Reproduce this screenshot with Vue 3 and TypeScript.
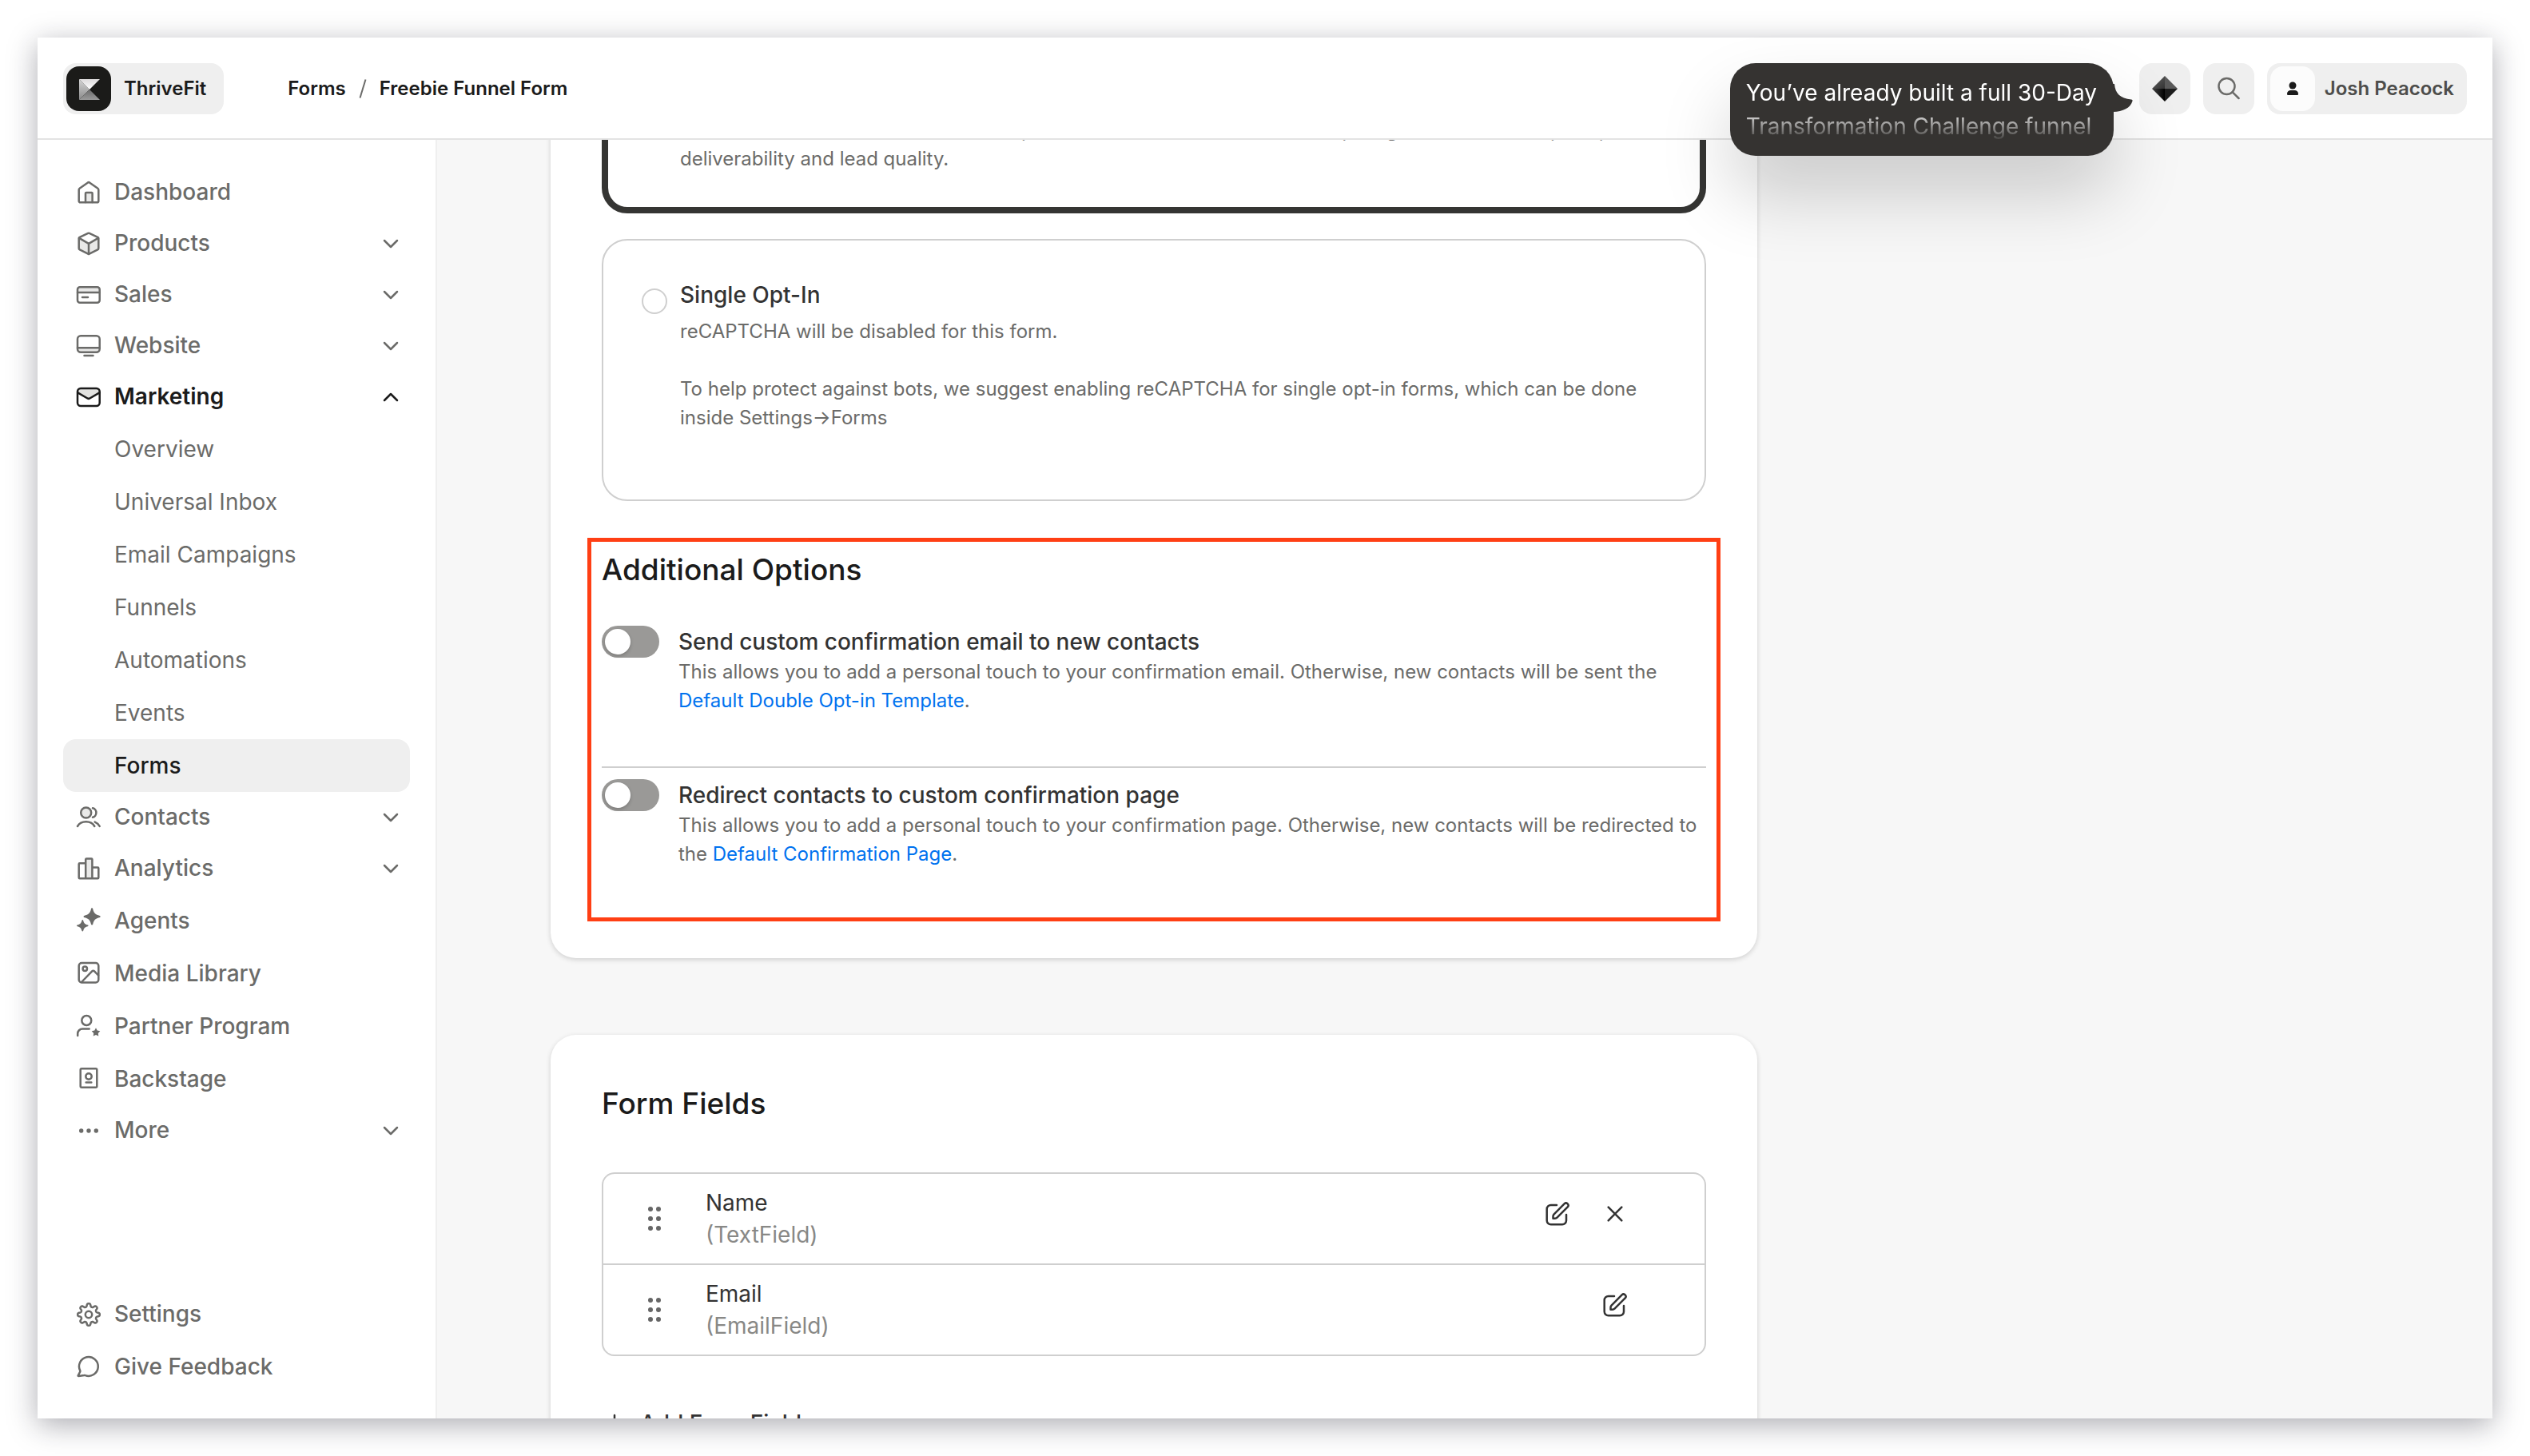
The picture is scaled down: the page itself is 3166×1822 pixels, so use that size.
<script setup lang="ts">
import { ref } from 'vue'

type IconName =
  | 'home' | 'box' | 'card' | 'monitor' | 'mail' | 'people' | 'bars'
  | 'sparkles' | 'image' | 'partner' | 'badge' | 'dots' | 'gear' | 'chat'

interface NavItem {
  label: string
  icon: IconName
  group?: boolean
  children?: string[]
}

const navItems: NavItem[] = [
  { label: 'Dashboard', icon: 'home' },
  { label: 'Products', icon: 'box', group: true },
  { label: 'Sales', icon: 'card', group: true },
  { label: 'Website', icon: 'monitor', group: true },
  {
    label: 'Marketing',
    icon: 'mail',
    group: true,
    children: ['Overview', 'Universal Inbox', 'Email Campaigns', 'Funnels', 'Automations', 'Events', 'Forms'],
  },
  { label: 'Contacts', icon: 'people', group: true },
  { label: 'Analytics', icon: 'bars', group: true },
  { label: 'Agents', icon: 'sparkles' },
  { label: 'Media Library', icon: 'image' },
  { label: 'Partner Program', icon: 'partner' },
  { label: 'Backstage', icon: 'badge' },
  { label: 'More', icon: 'dots', group: true },
]

const footerItems: NavItem[] = [
  { label: 'Settings', icon: 'gear' },
  { label: 'Give Feedback', icon: 'chat' },
]

const activeGroup = 'Marketing'
const activePage = 'Forms'

// Outline of an eight-toothed gear with rounded teeth.
function gearPath(cx: number, cy: number, radius: number, depth: number): string {
  const points: string[] = []
  for (let i = 0; i < 160; i++) {
    const angle = (i / 160) * Math.PI * 2
    const r = radius + depth * Math.tanh(1.8 * Math.cos(8 * angle))
    points.push(`${(cx + r * Math.sin(angle)).toFixed(2)} ${(cy - r * Math.cos(angle)).toFixed(2)}`)
  }
  return `M${points.join('L')}Z`
}

const icons: Record<IconName, string> = {
  home: '<path class="tint" d="M12 29V17.5h8.6V29z"/><path d="M3.7 13.4c0-.7.3-1.3.9-1.7L15 4.4c.6-.4 1.4-.4 2 0l10.4 7.3c.6.4.9 1 .9 1.700v14a1.900 1.900 0 0 1-1.900 1.900H5.600a1.900 1.900 0 0 1-1.900-1.900z"/><path d="M12 29V18a1 1 0 0 1 1-1h6.600a1 1 0 0 1 1 1v11"/>',
  box: '<path class="tint" d="M3.7 10.5 16 17l12.3-6.5v13.2L16 30 3.7 23.7z"/><path d="M15.2 3.9a2 2 0 0 1 1.6 0l10.5 5c.6.3 1 .9 1 1.6v12.2c0 .7-.4 1.4-1 1.7l-10.5 5.3a2 2 0 0 1-1.6 0L4.700 24.400c-.6-.3-1-1-1-1.700V10.500c0-.7.4-1.300 1-1.600z"/><path d="m4 9.900 12 6.900 12-6.900M16 17v13"/>',
  card: '<path class="tint" d="M2.300 8h27.400v6H2.300z"/><rect x="2" y="7.300" width="27.700" height="19.400" rx="3"/><path d="M2 14h27.700M8 20h7"/>',
  monitor: '<path class="tint" d="M2.300 19.300h27.400v5H2.300z"/><rect x="2" y="4.300" width="27.700" height="20.400" rx="4"/><path d="M2 19.300h27.700M10.500 29h11"/>',
  mail: '<path class="tint strong" d="M2.500 7h27v4.500L16 19 2.500 11.500z"/><rect x="2" y="6" width="27.700" height="22" rx="4"/><path d="m2.300 11.300 12.200 7.200a3 3 0 0 0 2.800 0l12.200-7.200"/>',
  people: '<circle class="tint outlined" cx="12.700" cy="11" r="6.500"/><path d="M21 5.300c2.600.5 4.400 3 4.400 5.700s-1.800 5.200-4.400 5.700M2 28c2-3.400 6-5.700 10.700-5.700S21.300 24.600 23.300 28M23.700 22.600c2.500 1 4.700 2.900 6 5.400"/>',
  bars: '<path class="tint" d="M12.200 5h8.200v24h-8.200z"/><path d="M12.200 29.300V5.600a1 1 0 0 1 1-1h6.200a1 1 0 0 1 1 1v23.700M12.200 10.300H4.700a1 1 0 0 0-1 1v17a1 1 0 0 0 1 1h22.600a1 1 0 0 0 1-1V16.600a1 1 0 0 0-1-1h-6.900"/>',
  sparkles: '<path class="solid" d="M20 .5c.5-.5 1 0 1.200.8 1.300 5.500 3 7.200 8.800 8.700.9.300.9 1.700 0 2-5.800 1.500-7.500 3.200-8.800 8.700-.2.900-1.900.9-2.200 0-1.300-5.500-3-7.200-8.800-8.700-.9-.3-.9-1.700 0-2 5.800-1.500 7.500-3.200 8.800-8.700.2-.8.500-1.300 1-.8z"/><path class="solid" d="M8.300 15c.4 0 .7.300.9.900.9 3.500 2.100 4.700 5.700 5.600.9.300.9 1.400 0 1.700-3.600.9-4.800 2.100-5.700 5.600-.3.900-1.500.9-1.800 0-.9-3.500-2.100-4.700-5.700-5.600-.9-.3-.9-1.400 0-1.700 3.600-.9 4.800-2.100 5.700-5.600.2-.6.500-.9.900-.9z"/>',
  image: '<rect x="3.700" y="3" width="24.600" height="24.500" rx="3.500"/><circle cx="11.300" cy="10.300" r="2.700"/><path d="m7 27 13.200-13.600a2 2 0 0 1 2.900 0L28 18.500"/>',
  partner: '<circle cx="13.300" cy="9" r="6"/><path d="M2.200 28v-2.500a6 6 0 0 1 6-6h8.500"/><path class="solid" d="m25 18.300 1.700 3.300 3.600.6-2.500 2.700.5 3.700-3.300-1.600-3.300 1.600.5-3.700-2.500-2.700 3.600-.6z"/>',
  badge: '<rect x="5.700" y="3.300" width="20.600" height="23.400" rx="1.500"/><circle cx="16" cy="13" r="3.700"/><path d="M12.700 20.400h6.600"/>',
  dots: '<circle class="solid" cx="6.700" cy="17" r="2.700"/><circle class="solid" cx="16" cy="17" r="2.700"/><circle class="solid" cx="25.300" cy="17" r="2.700"/>',
  gear: `<path d="${gearPath(16, 17, 11.9, 2)}"/><circle cx="16" cy="17" r="4.200"/>`,
  chat: '<path d="M3.300 28.100c-.5 0-.8-.4-.6-.8l2.500-4.600c.2-.4.200-.9.100-1.300a11.900 11.900 0 1 1 6.400 5.700c-.4-.2-.8-.2-1.200-.1z"/>',
}

const sendCustomEmail = ref(false)
const redirectContacts = ref(false)
const optIn = ref('double')

const fields = [
  { name: 'Name', type: '(TextField)', removable: true },
  { name: 'Email', type: '(EmailField)', removable: false },
]
</script>

<template>
  <div class="window">
    <header class="topbar">
      <button class="brand" type="button">
        <svg class="logo" viewBox="0 0 56 56" aria-hidden="true">
          <defs>
            <linearGradient id="logo-left" x1="0" y1="0" x2="0" y2="1">
              <stop offset="0" stop-color="#d5d5d5" />
              <stop offset="1" stop-color="#8a8a8a" />
            </linearGradient>
            <linearGradient id="logo-top" x1="0" y1="0" x2="0" y2="1">
              <stop offset="0" stop-color="#dcdadb" />
              <stop offset="1" stop-color="#ffffff" />
            </linearGradient>
            <linearGradient id="logo-bottom" x1="0" y1="0" x2="0" y2="1">
              <stop offset="0" stop-color="#6a6a6a" />
              <stop offset="1" stop-color="#9a9a9a" />
            </linearGradient>
          </defs>
          <rect width="56" height="56" rx="16" fill="#1b1b19" />
          <path d="M16 16v26l13-13z" fill="url(#logo-left)" />
          <path d="M16 16h26L29 29z" fill="url(#logo-top)" />
          <path d="M16 42h26L29 29z" fill="url(#logo-bottom)" />
        </svg>
        <span>ThriveFit</span>
      </button>

      <nav class="crumbs" aria-label="Breadcrumb">
        <a href="#forms">Forms</a>
        <svg class="slash" viewBox="0 0 10 26" aria-hidden="true"><path d="M8.500 1.500 1.500 24.500" /></svg>
        <a href="#form" aria-current="page">Freebie Funnel Form</a>
      </nav>

      <div class="tools">
        <div class="assistant">
          <button class="tool" type="button" aria-label="Assistant">
            <svg viewBox="0 0 32 32" width="32" height="32" aria-hidden="true">
              <defs>
                <linearGradient id="gem-left" x1="0" y1="0" x2="1" y2="1">
                  <stop offset="0" stop-color="#666" />
                  <stop offset="1" stop-color="#333" />
                </linearGradient>
                <linearGradient id="gem-low" x1="0" y1="0" x2="1" y2="0">
                  <stop offset="0" stop-color="#444" />
                  <stop offset="1" stop-color="#000" />
                </linearGradient>
              </defs>
              <path d="M16 0v16H0z" fill="url(#gem-left)" />
              <path d="M16 0v16h16z" fill="#5a5a5a" />
              <path d="M0 16h16v16z" fill="url(#gem-low)" />
              <path d="M32 16H16v16z" fill="#1d1d1d" />
            </svg>
          </button>
          <div class="bubble" role="status">
            <p>You’ve already built a full 30-Day Transformation Challenge funnel</p>
            <svg class="tail" viewBox="0 0 26 36" aria-hidden="true">
              <path d="M0 0h2c1 12 7 18 21 19.500 1.500.2 1.800 1 1.500 2C22 30 13 34.500 0 35z" />
            </svg>
          </div>
        </div>
        <button class="tool" type="button" aria-label="Search">
          <svg class="line" viewBox="0 0 32 32" width="32" height="32" aria-hidden="true">
            <circle cx="13.500" cy="13" r="10" />
            <path d="m20.700 20.300 7.800 7.700" />
          </svg>
        </button>
        <button class="profile" type="button">
          <span class="avatar">
            <svg viewBox="0 0 16 18" width="16" height="18" aria-hidden="true">
              <circle cx="8" cy="5" r="4.500" />
              <path d="M1 15.500C1 12.500 3 11 5.500 11h5c2.500 0 4.500 1.500 4.500 4.500 0 1-.5 1.500-1.500 1.500h-11C1.500 17 1 16.500 1 15.500z" />
            </svg>
          </span>
          <span>Josh Peacock</span>
        </button>
      </div>
    </header>

    <div class="body">
      <aside class="sidebar">
        <nav class="nav" aria-label="Main">
          <template v-for="item in navItems" :key="item.label">
            <button
              v-if="item.group"
              type="button"
              class="item group"
              :class="{ open: item.label === activeGroup }"
              :aria-expanded="item.label === activeGroup"
            >
              <svg class="line" viewBox="0 0 32 32" width="32" height="32" aria-hidden="true" v-html="icons[item.icon]" />
              <span class="label">{{ item.label }}</span>
              <svg class="line chevron" viewBox="0 0 32 32" width="32" height="32" aria-hidden="true">
                <path :d="item.label === activeGroup ? 'm8 21 8-8 8 8' : 'm8 13 8 8 8-8'" />
              </svg>
            </button>
            <a v-else href="#" class="item">
              <svg class="line" viewBox="0 0 32 32" width="32" height="32" aria-hidden="true" v-html="icons[item.icon]" />
              <span class="label">{{ item.label }}</span>
            </a>
            <a
              v-for="child in item.children"
              :key="child"
              href="#"
              class="item child"
              :class="{ current: child === activePage }"
            >{{ child }}</a>
          </template>
        </nav>
        <nav class="nav" aria-label="Support">
          <a v-for="item in footerItems" :key="item.label" href="#" class="item">
            <svg class="line" viewBox="0 0 32 32" width="32" height="32" aria-hidden="true" v-html="icons[item.icon]" />
            <span class="label">{{ item.label }}</span>
          </a>
        </nav>
      </aside>

      <main class="main">
        <div class="column">
          <section class="panel first">
            <div class="option selected">
              <input id="opt-double" v-model="optIn" type="radio" name="opt-in" value="double" />
              <div class="option-text">
                <label for="opt-double">Double Opt-In</label>
                <p>
                  Leads have to confirm their email to opt in. We recommend this, since requiring confirmation helps improve
                  deliverability and lead quality.
                </p>
              </div>
            </div>

            <div class="option">
              <input id="opt-single" v-model="optIn" type="radio" name="opt-in" value="single" />
              <div class="option-text">
                <label for="opt-single">Single Opt-In</label>
                <p>reCAPTCHA will be disabled for this form.</p>
                <p class="note">
                  To help protect against bots, we suggest enabling reCAPTCHA for single opt-in forms, which can be done
                  inside Settings→Forms
                </p>
              </div>
            </div>

            <section class="extras">
              <h2>Additional Options</h2>
              <div class="switch-row">
                <input id="custom-email" v-model="sendCustomEmail" class="switch" type="checkbox" role="switch" />
                <div>
                  <label for="custom-email">Send custom confirmation email to new contacts</label>
                  <p>
                    This allows you to add a personal touch to your confirmation email. Otherwise, new contacts will be
                    sent the <a href="#template">Default Double Opt-in Template</a>.
                  </p>
                </div>
              </div>
              <div class="switch-row">
                <input id="custom-page" v-model="redirectContacts" class="switch" type="checkbox" role="switch" />
                <div>
                  <label for="custom-page">Redirect contacts to custom confirmation page</label>
                  <p>
                    This allows you to add a personal touch to your confirmation page. Otherwise, new contacts will be
                    redirected to the <a href="#page">Default Confirmation Page</a>.
                  </p>
                </div>
              </div>
            </section>
          </section>

          <section class="panel">
            <h2>Form Fields</h2>
            <ul class="fields">
              <li v-for="field in fields" :key="field.name">
                <svg class="grip" viewBox="0 0 32 32" width="32" height="32" aria-hidden="true">
                  <template v-for="y in [4, 16, 28]" :key="y">
                    <circle cx="11" :cy="y" r="3" />
                    <circle cx="21" :cy="y" r="3" />
                  </template>
                </svg>
                <div class="field-text">
                  <div>{{ field.name }}</div>
                  <div class="kind">{{ field.type }}</div>
                </div>
                <div class="actions">
                  <button type="button" :aria-label="`Edit ${field.name}`">
                    <svg class="line" viewBox="0 0 32 32" width="32" height="32" aria-hidden="true">
                      <path d="M15 5H7.700a5 5 0 0 0-5 5v14.300a5 5 0 0 0 5 5H22a5 5 0 0 0 5-5V17" />
                      <path d="M10.500 21.800v-2.600c0-1 .4-1.900 1-2.500L24.600 3.300a2.900 2.900 0 0 1 4.100 4.100L15.500 20.700c-.7.700-1.500 1.100-2.500 1.100z" />
                    </svg>
                  </button>
                  <button v-if="field.removable" type="button" :aria-label="`Remove ${field.name}`">
                    <svg class="line" viewBox="0 0 32 32" width="32" height="32" aria-hidden="true">
                      <path d="m7.700 7.700 16.600 16.600M24.300 7.700 7.700 24.300" />
                    </svg>
                  </button>
                </div>
              </li>
            </ul>
            <button class="add" type="button">
              <svg class="line" viewBox="0 0 32 32" width="32" height="32" aria-hidden="true">
                <path d="M16 6v20M6 16h20" />
              </svg>
              <span>Add Form Field</span>
            </button>
          </section>
        </div>
      </main>
    </div>
  </div>
</template>

<style>
body {
  margin: 0;
  background: #fff;
}
</style>

<style scoped>
*,
*::before {
  box-sizing: border-box;
}

.window {
  display: flex;
  flex-direction: column;
  height: calc(100vh - 94px);
  margin: 47px;
  background: #fff;
  color: #1b1b1b;
  font-family: Inter, "Liberation Sans", sans-serif;
  font-size: 28px;
  line-height: 40px;
  box-shadow: 0 8px 34px rgba(24, 26, 42, 0.36);
}

button {
  padding: 0;
  border: 0;
  background: none;
  color: inherit;
  font: inherit;
  text-align: left;
  cursor: pointer;
}

a {
  color: inherit;
  text-decoration: none;
}

h2,
p,
ul {
  margin: 0;
  padding: 0;
}

svg {
  display: block;
  flex: none;
}

.line {
  fill: none;
  stroke: currentColor;
  stroke-width: 2.5;
  stroke-linecap: round;
  stroke-linejoin: round;
}

.line :deep(.tint) {
  fill: #e9e9e8;
  stroke: none;
}

.line :deep(.strong) {
  fill: #e2e2e0;
}

.line :deep(.outlined) {
  stroke: currentColor;
}

.line :deep(.solid) {
  fill: currentColor;
  stroke: none;
}

/* Top bar */
.topbar {
  position: relative;
  z-index: 1;
  display: flex;
  flex: none;
  align-items: center;
  height: 128px;
  padding: 2px 32px 0;
  border-bottom: 2px solid #e3e3e3;
  font-size: 24px;
  font-weight: 600;
}

.brand {
  display: flex;
  align-items: center;
  gap: 16px;
  height: 64px;
  padding: 0 22px 0 4px;
  border-radius: 16px;
  background: #efefef;
}

.logo {
  width: 56px;
  height: 56px;
}

.crumbs {
  display: flex;
  align-items: center;
  gap: 16px;
  margin-left: 80px;
}

.slash {
  width: 10px;
  height: 26px;
  fill: none;
  stroke: #6b6b69;
  stroke-width: 2;
}

.tools {
  display: flex;
  gap: 16px;
  margin-left: auto;
}

.assistant {
  position: relative;
}

.tool {
  display: grid;
  place-items: center;
  width: 64px;
  height: 64px;
  border-radius: 16px;
  background: #efefef;
  color: #6b6b69;
}

.bubble {
  position: absolute;
  top: 0;
  right: calc(100% + 32px);
  width: 480px;
  padding: 16px 20px;
  border-radius: 32px;
  background: #353331;
  box-shadow: 0 48px 88px rgba(0, 0, 0, 0.18);
}

.tail {
  position: absolute;
  top: 26px;
  left: calc(100% - 1px);
  width: 26px;
  height: 36px;
  fill: #353331;
}

.profile {
  display: flex;
  align-items: center;
  gap: 12px;
  height: 64px;
  padding: 0 16px 0 4px;
  border-radius: 16px;
  background: #efefef;
  color: #4d4d4b;
}

.avatar {
  display: grid;
  place-items: center;
  width: 56px;
  height: 56px;
  border-radius: 16px;
  background: #fcfcfc;
  fill: #1b1b1b;
}

/* Sidebar */
.body {
  display: flex;
  flex: 1;
  min-height: 0;
}

.sidebar {
  display: flex;
  flex: none;
  flex-direction: column;
  justify-content: space-between;
  width: 500px;
  padding: 32px;
  border-right: 2px solid #efefef;
}

.nav {
  display: flex;
  flex-direction: column;
}

.item {
  display: flex;
  align-items: center;
  gap: 16px;
  height: 66px;
  padding: 0 8px 0 16px;
  border-radius: 16px;
  color: #6b6b69;
  font-weight: 500;
}

.group {
  height: 62px;
  margin-bottom: 2px;
}

.group.open {
  color: #1b1b1b;
  font-weight: 600;
}

.chevron {
  margin-left: auto;
}

.child {
  padding-left: 64px;
  font-weight: 400;
}

.child.current {
  background: #efefef;
  color: #1b1b1b;
  font-weight: 500;
}

/* Main column */
.main {
  flex: 1;
  min-width: 0;
  padding: 0 142px;
  overflow: hidden;
  background: #f7f7f7;
}

/* The page is scrolled so that the first option sits partly under the top bar */
.column {
  display: flex;
  flex-direction: column;
  gap: 96px;
  width: 66%;
  margin-top: -192px;
}

.panel {
  padding: 64px;
  border-radius: 32px;
  background: #fff;
  box-shadow: 0 2px 6px rgba(0, 0, 0, 0.16);
}

h2 {
  font-size: 37px;
  font-weight: 500;
  line-height: 44px;
}

.option {
  display: flex;
  gap: 16px;
  margin-bottom: 32px;
  padding: 48px 48px 84px;
  border: 2px solid #cfcfcf;
  border-radius: 32px;
}

.option.selected {
  padding: 42px;
  border: 8px solid #353533;
}

.option input {
  flex: none;
  width: 32px;
  height: 32px;
  margin: 12px 0 0;
  border: 2px solid #cfcfcf;
  border-radius: 50%;
  appearance: none;
}

.option input:checked {
  border: 10px solid #353533;
}

label {
  display: block;
  color: #333;
  font-weight: 500;
}

p {
  color: #6b6b69;
  font-size: 24px;
  line-height: 36px;
}

.bubble p {
  color: #fff;
  font-size: 28px;
  font-weight: 400;
  line-height: 42px;
  mask-image: linear-gradient(#000 48%, rgba(0, 0, 0, 0.1) 94%);
}

.option label {
  margin-bottom: 8px;
}

.note {
  margin-top: 36px;
}

.extras {
  position: relative;
  margin-top: 64px;
  padding-bottom: 48px;
}

/* Highlight frame drawn around the options block */
.extras::before {
  content: "";
  position: absolute;
  inset: -18px;
  border: 5px solid #ff3f14;
  pointer-events: none;
}

.switch-row {
  display: flex;
  align-items: flex-start;
  gap: 24px;
  margin-top: 48px;
}

.switch-row + .switch-row {
  margin-top: 64px;
  padding-top: 14px;
  border-top: 2px solid #cfcfcf;
}

.switch {
  flex: none;
  width: 72px;
  height: 40px;
  margin: 0;
  padding: 4px;
  border-radius: 20px;
  background: #9a9997;
  appearance: none;
}

.switch::before {
  content: "";
  display: block;
  width: 32px;
  height: 32px;
  border-radius: 50%;
  background: #fff;
  box-shadow: 0 2px 4px rgba(0, 0, 0, 0.2);
}

.switch:checked::before {
  margin-left: auto;
}

.switch-row a {
  color: #0072ef;
}

/* Field list */
.fields {
  margin-top: 64px;
  border: 2px solid #cfcfcf;
  border-radius: 16px;
  list-style: none;
}

.fields li {
  display: flex;
  align-items: center;
  gap: 48px;
  padding: 16px 96px 16px 48px;
  color: #333;
}

.fields li + li {
  border-top: 2px solid #cfcfcf;
}

.grip {
  fill: #666;
}

.kind {
  color: #888886;
}

.actions {
  display: flex;
  align-self: flex-start;
  gap: 40px;
  margin: 18px 0 0 auto;
}

.add {
  display: flex;
  align-items: center;
  gap: 16px;
  margin-top: 64px;
  color: #333;
  font-weight: 500;
}
</style>
